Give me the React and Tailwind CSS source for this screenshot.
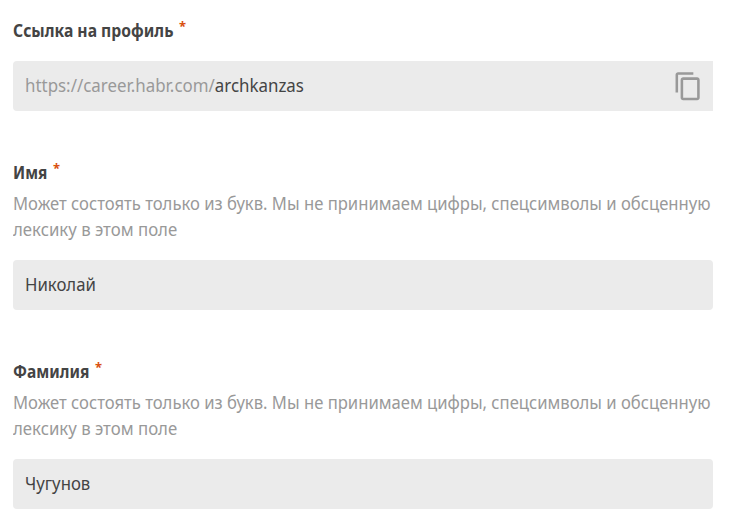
function Label({ children, className }) {
  return (
    <div className="flex h-[26px] items-center whitespace-nowrap text-[18.500px] font-bold text-[#444]">
      <span className={`origin-left ${className}`}>{children}</span>
      <span className="ml-[6px] h-[26px] self-start text-[13px] leading-[18px] text-[#d9500f]">*</span>
    </div>
  );
}

function Hint() {
  return (
    <p className="mt-[5px] whitespace-nowrap text-[18.500px] leading-[26px] text-[#999]">
      <span className="block w-[700px] origin-left scale-x-[0.8995]">
        Может состоять только из букв. Мы не принимаем цифры, спецсимволы и обсценную
      </span>
      <span className="block origin-left scale-x-[0.907]">лексику в этом поле</span>
    </p>
  );
}

function CopyIcon() {
  return (
    <svg viewBox="0 0 24 24" className="h-[30.5px] w-[30.5px]" fill="#999">
      <path d="M16 1H4c-1.100 0-2 .9-2 2v14h2V3h12V1zm3 4H8c-1.100 0-2 .9-2 2v14c0 1.100.9 2 2 2h11c1.100 0 2-.9 2-2V7c0-1.100-.9-2-2-2zm0 16H8V7h11v14z" />
    </svg>
  );
}

export default function App() {
  return (
    <main className="h-[516px] w-[729px] overflow-hidden bg-white pl-[13px] pr-4 pt-[17px] font-['Noto_Sans',sans-serif] text-[18.500px] text-[#444]">
      <section>
        <Label className="w-[160px] scale-x-[0.849]">Ссылка на профиль</Label>
        <div className="mt-[18px] flex h-[50px] items-center rounded-l bg-[#ebebeb] pl-[12px] pr-[10px]">
          <span className="origin-left scale-x-[0.913] pb-[2px]">
            <span className="text-[#999]">https://career.habr.com/</span>
            <span>archkanzas</span>
          </span>
          <span className="ml-auto">
            <CopyIcon />
          </span>
        </div>
      </section>
      <section className="mt-[48px]">
        <Label className="w-[34px] scale-x-[0.830]">Имя</Label>
        <Hint />
        <div className="mt-[18px] flex h-[50px] items-center rounded bg-[#ebebeb] px-[12px]">
          <span className="origin-left scale-x-[0.905] pb-[2px]">Николай</span>
        </div>
      </section>
      <section className="mt-[48px]">
        <Label className="w-[76px] scale-x-[0.840]">Фамилия</Label>
        <Hint />
        <div className="mt-[18px] flex h-[50px] items-center rounded bg-[#ebebeb] px-[12px]">
          <span className="origin-left scale-x-[0.905] pb-[2px]">Чугунов</span>
        </div>
      </section>
    </main>
  );
}
